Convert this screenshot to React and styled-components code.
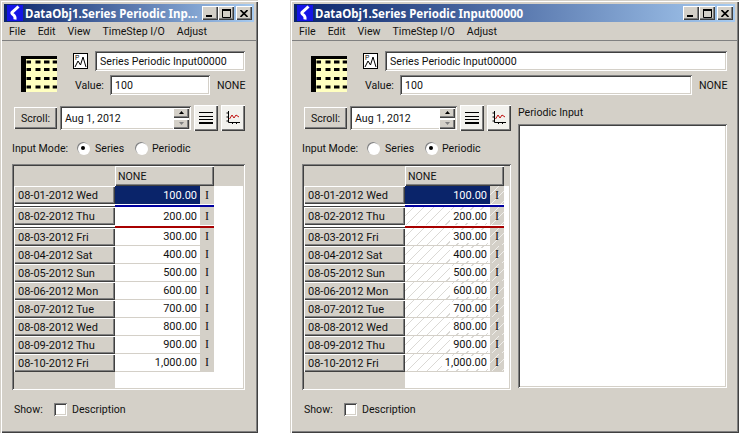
import React from 'react';
import styled, { createGlobalStyle, css } from 'styled-components';

const GlobalStyle = createGlobalStyle`
  html, body {
    margin: 0;
    padding: 0;
    background: #fff;
  }
  * {
    box-sizing: border-box;
  }
`;

const FACE = '#d4d0c8';
const raised = css`
  box-shadow: inset 1px 1px 0 #fff, inset -1px -1px 0 #404040, inset -2px -2px 0 #808080;
`;
const sunken = css`
  box-shadow: inset 1px 1px 0 #808080, inset -1px -1px 0 #fff, inset 2px 2px 0 #404040, inset -2px -2px 0 ${FACE};
`;
const hatch = css`
  background-color: ${p => (p.$flag ? FACE : '#fff')};
  background-image: repeating-linear-gradient(135deg, transparent 0 6px, ${p => (p.$flag ? '#f0efec' : '#dbd9d5')} 6px 7px);
`;

const Page = styled.div`
  display: flex;
  gap: 32px;
  width: 740px;
  height: 433px;
  overflow: hidden;
  font-family: Roboto, "Liberation Sans", sans-serif;
  font-size: 10.6px;
  color: #111;
`;

const Window = styled.div`
  flex: none;
  display: flex;
  flex-direction: column;
  width: ${p => p.$w}px;
  height: 433px;
  padding: 4px;
  background: ${FACE};
  box-shadow: inset 1px 1px 0 ${FACE}, inset 2px 2px 0 #fff, inset -1px -1px 0 #404040, inset -2px -2px 0 #808080;
`;

const TitleBar = styled.div`
  flex: none;
  display: flex;
  align-items: center;
  height: 18px;
  padding: 0 2px 0 3px;
  background: linear-gradient(90deg, #0a246a, #a6caf0);
`;

const TitleText = styled.span`
  flex: 1;
  margin-left: 2px;
  font-family: "Noto Sans", sans-serif;
  font-weight: 700;
  font-size: 11.5px;
  color: #fff;
  white-space: nowrap;
`;

const CaptionButton = styled.div`
  flex: none;
  display: flex;
  align-items: center;
  justify-content: center;
  width: 16px;
  height: 14px;
  margin-left: ${p => (p.$gap ? 2 : 0)}px;
  background: ${FACE};
  ${raised}
`;

const MenuBar = styled.div`
  flex: none;
  display: flex;
  align-items: center;
  gap: 12px;
  height: 19px;
  margin: 0 -2px;
  padding: 1px 0 0 7px;
  border-bottom: 1px solid #808080;
`;

const Body = styled.div`
  flex: 1;
  display: flex;
  flex-direction: column;
  padding: 10px ${p => p.$pr}px 0 8px;
`;

const Head = styled.div`
  display: grid;
  grid-template-columns: 61px 1fr;
  height: 44px;
`;

const BigIconBox = styled.div`
  padding: 5px 0 0 9px;
`;

const Fields = styled.div`
  display: flex;
  flex-direction: column;
  gap: 4px;
`;

const FieldRow = styled.div`
  display: flex;
  align-items: center;
  height: 20px;
`;

const IconSlot = styled.span`
  display: flex;
  flex: none;
  width: 22px;
`;

const Input = styled.div`
  flex: 1;
  display: flex;
  align-items: center;
  height: 100%;
  padding: 1px 0 0 5px;
  background: #fff;
  white-space: nowrap;
  ${sunken}
`;

const ValueLabel = styled.span`
  width: 37px;
  padding-left: 2px;
`;

const Unit = styled.span`
  width: 35px;
  padding-left: 7px;
`;

const Lower = styled.div`
  display: flex;
  gap: 7px;
  flex: none;
  margin-top: 10px;
`;

const LeftCol = styled.div`
  flex: none;
  display: flex;
  flex-direction: column;
  width: ${p => p.$w}px;
`;

const ScrollRow = styled.div`
  display: flex;
  align-items: center;
  height: 26px;
  padding-left: 2px;
`;

const ScrollButton = styled.div`
  flex: none;
  display: flex;
  align-items: center;
  justify-content: center;
  width: 43px;
  height: 22px;
  margin-right: 3px;
  background: ${FACE};
  ${raised}
`;

const DateField = styled.div`
  flex: 1;
  display: flex;
  align-items: center;
  justify-content: space-between;
  height: 24px;
  padding: 0 2px 0 5px;
  background: #fff;
  ${sunken}
`;

const Spinner = styled.div`
  display: flex;
  flex-direction: column;
  gap: 1px;
`;

const SpinButton = styled.div`
  display: flex;
  align-items: center;
  justify-content: center;
  width: 16px;
  height: 10px;
  background: ${FACE};
  ${raised}
`;

const ToolButton = styled.div`
  flex: none;
  display: flex;
  align-items: center;
  justify-content: center;
  width: 24px;
  height: 26px;
  margin-left: 3px;
  background: #f2f1ed;
  ${raised}
`;

const ModeRow = styled.div`
  display: flex;
  align-items: center;
  height: 33px;
  padding-top: 1px;
`;

const ModeLabel = styled.span`
  width: 65px;
`;

const Radio = styled.span`
  flex: none;
  display: flex;
  align-items: center;
  justify-content: center;
  width: 12px;
  height: 12px;
  margin-right: ${p => p.$mr}px;
  border-radius: 50%;
  background: #fff;
  box-shadow: inset 1px 1px 0 #808080, 1px 1px 0 #fff;
`;

const RadioDot = styled.span`
  width: 4px;
  height: 4px;
  border-radius: 50%;
  background: #000;
`;

const ModeText = styled.span`
  width: ${p => p.$w}px;
`;

const Table = styled.div`
  display: flex;
  flex-direction: column;
  height: 226px;
  padding: 2px 1px 1px 2px;
  background: #fff;
  ${sunken}
`;

const HeaderRow = styled.div`
  flex: none;
  display: flex;
  height: 20px;
  background: ${FACE};
`;

const Corner = styled.div`
  width: 101px;
`;

const ColumnHead = styled.div`
  display: flex;
  align-items: center;
  width: 99px;
  padding-left: 3px;
  ${raised}
`;

const Row = styled.div`
  flex: none;
  display: flex;
  height: ${p => (p.$mark ? 21 : 18)}px;
`;

const RowHead = styled.div`
  flex: none;
  display: flex;
  flex-direction: column;
  width: 101px;
  background: #fff;
`;

const RowLabel = styled.div`
  display: flex;
  align-items: center;
  height: 18px;
  padding-left: 4px;
  font-size: 11px;
  background: ${FACE};
  ${raised}
`;

const RowGap = styled.div`
  height: 3px;
  border-bottom: 1px solid #404040;
`;

const CellCol = styled.div`
  flex: none;
  display: flex;
  flex-direction: column;
  width: 99px;
`;

const Cells = styled.div`
  display: flex;
  height: 18px;
  ${p => !p.$mark && `border-bottom: 1px solid ${FACE};`}
`;

const ValueCell = styled.div`
  flex: none;
  display: flex;
  justify-content: flex-end;
  align-items: center;
  width: 85px;
  font-size: 11px;
  ${p => p.$selected && `background: #0a246a; color: #fff;`}
  ${p => p.$periodic && !p.$selected && hatch}
`;

const ValueText = styled.span`
  padding: 0 3px;
  background: ${p => (p.$periodic && !p.$selected ? '#fff' : 'transparent')};
`;

const FlagCell = styled.div`
  flex: 1;
  display: flex;
  align-items: center;
  padding-left: 5px;
  font-family: "Liberation Serif", serif;
  font-size: 12px;
  background: ${FACE};
  ${p => p.$periodic && hatch}
`;

const MarkLine = styled.div`
  height: 3px;
  padding-top: 1px;
  background: ${p => p.$color};
  background-clip: content-box;
`;

const Filler = styled.div`
  flex: 1;
  display: flex;
`;

const FillerHead = styled.div`
  width: 101px;
  background: ${FACE};
`;

const Side = styled.div`
  flex: 1;
  display: flex;
  flex-direction: column;
`;

const SideLabel = styled.div`
  height: 14px;
  padding-top: 1px;
  line-height: 14px;
  margin-bottom: 5px;
`;

const SideBox = styled.div`
  flex: 1;
  margin-bottom: 2px;
  background: #fff;
  ${sunken}
`;

const ShowRow = styled.div`
  display: flex;
  align-items: center;
  height: 38px;
  padding-left: 2px;
`;

const ShowLabel = styled.span`
  width: 40px;
`;

const Checkbox = styled.span`
  width: 13px;
  height: 13px;
  margin-right: 5px;
  background: #fff;
  ${sunken}
`;

const KLogo = () => (
  <svg width="16" height="16" viewBox="0 0 16 16">
    <rect width="16" height="16" fill="#1414e6" />
    <path d="M11.5 1.5L5 7.5Q4.5 8.5 6 9.5Q8.5 11 8 14.5" fill="none" stroke="#fff" strokeWidth="3" />
  </svg>
);

const MinIcon = () => (
  <svg width="8" height="8" viewBox="0 0 8 8"><rect x="0" y="6" width="6" height="2" fill="#000" /></svg>
);
const MaxIcon = () => (
  <svg width="9" height="9" viewBox="0 0 9 9"><path d="M0.5 1.5h8v7h-8z" fill="none" stroke="#000" /><rect width="9" height="2" fill="#000" /></svg>
);
const CloseIcon = () => (
  <svg width="8" height="7" viewBox="0 0 8 7"><path d="M0.5 0L7.5 7M7.5 0L0.5 7" stroke="#000" strokeWidth="1.6" /></svg>
);

const TableIcon = () => {
  const ys = [4.5, 12, 21, 29.5];
  const xs = [[5.5, 4.5], [14.5, 5], [23, 5.5], [31.7, 4.3]];
  return (
    <svg width="36" height="36" viewBox="0 0 36 36">
      <rect width="36" height="36" fill="#ffffc0" />
      <rect width="36" height="3" fill="#000" />
      <rect width="5" height="36" fill="#000" />
      {ys.map(y => xs.map(([x, w]) => <rect key={`${x}-${y}`} x={x} y={y} width={w} height="3" fill="#000" />))}
    </svg>
  );
};

const SeriesIcon = () => (
  <svg width="16" height="16" viewBox="0 0 16 16">
    <rect x="0.5" y="0.5" width="14" height="15" fill="#fff" stroke="#000" />
    <text x="2" y="6.5" fontFamily="Liberation Sans" fontSize="6.5" fill="#000">P</text>
    <path d="M2 14L5 8L7.5 12L10 4L13 14" fill="none" stroke="#000" />
  </svg>
);

const ListIcon = () => (
  <svg width="14" height="14" viewBox="0 0 14 14">
    <path d="M0 1.5H14M0 5.5H14M0 8.5H14" stroke="#000" />
    <rect y="11" width="14" height="2" fill="#000" />
  </svg>
);

const GraphIcon = () => (
  <svg width="14" height="14" viewBox="0 0 14 14">
    <path d="M2.5 0V11.5H14M0.5 2H2.5M0.5 6H2.5M0.5 10H2.5M6.5 11.5V13M10.5 11.5V13" fill="none" stroke="#000" />
    <path d="M3.5 8L6 4L8 7L10 4L13 6" fill="none" stroke="#c01010" />
  </svg>
);

const Up = () => <svg width="5" height="3" viewBox="0 0 5 3"><path d="M2.5 0L5 3H0z" fill="#000" /></svg>;
const Down = () => <svg width="5" height="3" viewBox="0 0 5 3"><path d="M0 0H5L2.5 3z" fill="#808080" /></svg>;

const rows = [
  ['08-01-2012 Wed', '100.00'],
  ['08-02-2012 Thu', '200.00'],
  ['08-03-2012 Fri', '300.00'],
  ['08-04-2012 Sat', '400.00'],
  ['08-05-2012 Sun', '500.00'],
  ['08-06-2012 Mon', '600.00'],
  ['08-07-2012 Tue', '700.00'],
  ['08-08-2012 Wed', '800.00'],
  ['08-09-2012 Thu', '900.00'],
  ['08-10-2012 Fri', '1,000.00'],
];

const marks = ['#0000a0', '#a80000'];

const DataTable = ({ periodic }) => (
  <Table>
    <HeaderRow>
      <Corner />
      <ColumnHead>NONE</ColumnHead>
    </HeaderRow>
    {rows.map(([label, value], i) => (
      <Row key={label} $mark={i < 2}>
        <RowHead>
          <RowLabel>{label}</RowLabel>
          {i < 2 && <RowGap />}
        </RowHead>
        <CellCol>
          <Cells $mark={i < 2}>
            <ValueCell $selected={i === 0} $periodic={periodic}>
              <ValueText $selected={i === 0} $periodic={periodic}>{value}</ValueText>
            </ValueCell>
            <FlagCell $flag $periodic={periodic}>I</FlagCell>
          </Cells>
          {i < 2 && <MarkLine $color={marks[i]} />}
        </CellCol>
      </Row>
    ))}
    <Filler>
      <FillerHead />
    </Filler>
  </Table>
);

const DataWindow = ({ width, title, periodic, paddingRight, leftWidth }) => (
  <Window $w={width}>
    <TitleBar>
      <KLogo />
      <TitleText>{title}</TitleText>
      <CaptionButton><MinIcon /></CaptionButton>
      <CaptionButton><MaxIcon /></CaptionButton>
      <CaptionButton $gap><CloseIcon /></CaptionButton>
    </TitleBar>
    <MenuBar>
      <span>File</span>
      <span>Edit</span>
      <span>View</span>
      <span>TimeStep I/O</span>
      <span>Adjust</span>
    </MenuBar>
    <Body $pr={paddingRight}>
      <Head>
        <BigIconBox><TableIcon /></BigIconBox>
        <Fields>
          <FieldRow>
            <IconSlot><SeriesIcon /></IconSlot>
            <Input>Series Periodic Input00000</Input>
          </FieldRow>
          <FieldRow>
            <ValueLabel>Value:</ValueLabel>
            <Input>100</Input>
            <Unit>NONE</Unit>
          </FieldRow>
        </Fields>
      </Head>
      <Lower>
        <LeftCol $w={leftWidth}>
          <ScrollRow>
            <ScrollButton>Scroll:</ScrollButton>
            <DateField>
              Aug 1, 2012
              <Spinner>
                <SpinButton><Up /></SpinButton>
                <SpinButton><Down /></SpinButton>
              </Spinner>
            </DateField>
            <ToolButton><ListIcon /></ToolButton>
            <ToolButton><GraphIcon /></ToolButton>
          </ScrollRow>
          <ModeRow>
            <ModeLabel>Input Mode:</ModeLabel>
            <Radio $mr={6}>{!periodic && <RadioDot />}</Radio>
            <ModeText $w={40}>Series</ModeText>
            <Radio $mr={5}>{periodic && <RadioDot />}</Radio>
            <ModeText $w={50}>Periodic</ModeText>
          </ModeRow>
          <DataTable periodic={periodic} />
        </LeftCol>
        {periodic && (
          <Side>
            <SideLabel>Periodic Input</SideLabel>
            <SideBox />
          </Side>
        )}
      </Lower>
      <ShowRow>
        <ShowLabel>Show:</ShowLabel>
        <Checkbox />
        Description
      </ShowRow>
    </Body>
  </Window>
);

const App = () => (
  <Page>
    <GlobalStyle />
    <DataWindow width={258} title="DataObj1.Series Periodic Inp..." paddingRight={9} leftWidth={233} />
    <DataWindow width={449} title="DataObj1.Series Periodic Input00000" periodic paddingRight={8} leftWidth={209} />
  </Page>
);

export default App;
